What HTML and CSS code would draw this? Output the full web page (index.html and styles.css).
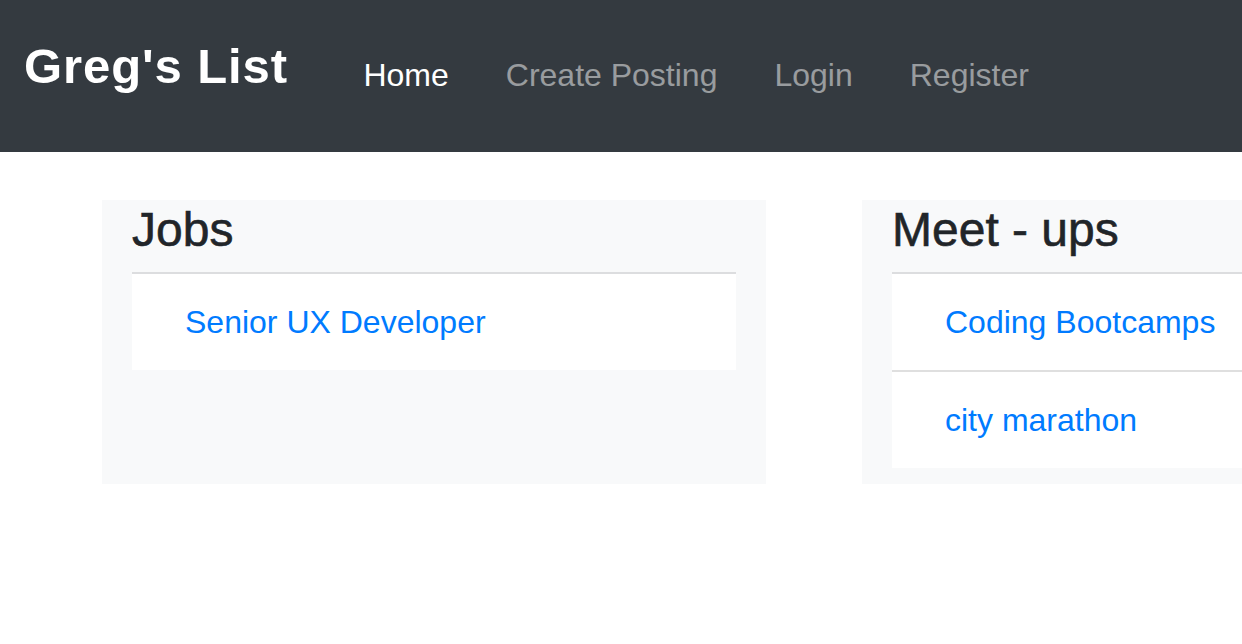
FILE: index.html
```html
<!DOCTYPE html>
<html lang="en">
<head>
<meta charset="utf-8">
<title>Greg's List</title>
<link rel="stylesheet" href="styles.css">
</head>
<body>
<nav class="navbar">
  <a class="brand" href="#">Greg's List</a>
  <ul class="nav">
    <li><a class="nav-link active" href="#">Home</a></li>
    <li><a class="nav-link" href="#">Create Posting</a></li>
    <li><a class="nav-link" href="#">Login</a></li>
    <li><a class="nav-link" href="#">Register</a></li>
  </ul>
</nav>
<main class="board">
  <section class="card">
    <h2 class="card-title">Jobs</h2>
    <hr class="rule">
    <ul class="list">
      <li class="list-item"><a href="#">Senior UX Developer</a></li>
    </ul>
  </section>
  <section class="card">
    <h2 class="card-title">Meet - ups</h2>
    <hr class="rule">
    <ul class="list">
      <li class="list-item"><a href="#">Coding Bootcamps</a></li>
      <li class="list-item"><a href="#">city marathon</a></li>
    </ul>
  </section>
</main>
</body>
</html>
```

FILE: styles.css
```css
html, body {
  margin: 0;
  padding: 0;
}
body {
  font-family: "Liberation Sans", Arial, sans-serif;
  color: #212529;
  background: #fff;
  overflow: hidden;
  width: 1242px;
  height: 644px;
}
a {
  text-decoration: none;
}
.navbar {
  display: flex;
  align-items: flex-start;
  box-sizing: border-box;
  height: 152px;
  padding: 37px 0 0 24px;
  background: #343a40;
}
.brand {
  color: #fff;
  font-size: 49px;
  font-weight: 700;
  letter-spacing: 0.9px;
  line-height: 1.2;
  margin-right: 47px;
}
.nav {
  display: flex;
  list-style: none;
  margin: 14px 0 0;
  padding: 0;
}
.nav-link {
  display: block;
  padding: 0 28.5px;
  font-size: 32px;
  line-height: 48px;
  color: rgba(255, 255, 255, 0.5);
}
.nav-link.active {
  color: #fff;
}
.board {
  display: flex;
  align-items: stretch;
  gap: 96px;
  padding: 48px 0 0 102px;
}
.card {
  flex: 0 0 664px;
  box-sizing: border-box;
  background: #f8f9fa;
  padding: 0 30px 16px;
}
.card-title {
  margin: 0 0 15px;
  padding-top: 3px;
  font-size: 48px;
  font-weight: 500;
  line-height: 54px;
  color: #212529;
  -webkit-text-stroke: 0.6px #212529;
}
.rule {
  margin: 0;
  border: 0;
  border-top: 2px solid #dcdddf;
}
.list {
  list-style: none;
  margin: 0;
  padding: 0;
  background: #fff;
}
.list-item {
  padding: 24px 53px;
  font-size: 32px;
  line-height: 48px;
}
.list-item + .list-item {
  border-top: 2px solid #dfdfdf;
}
.list-item a {
  color: #007bff;
}
```
